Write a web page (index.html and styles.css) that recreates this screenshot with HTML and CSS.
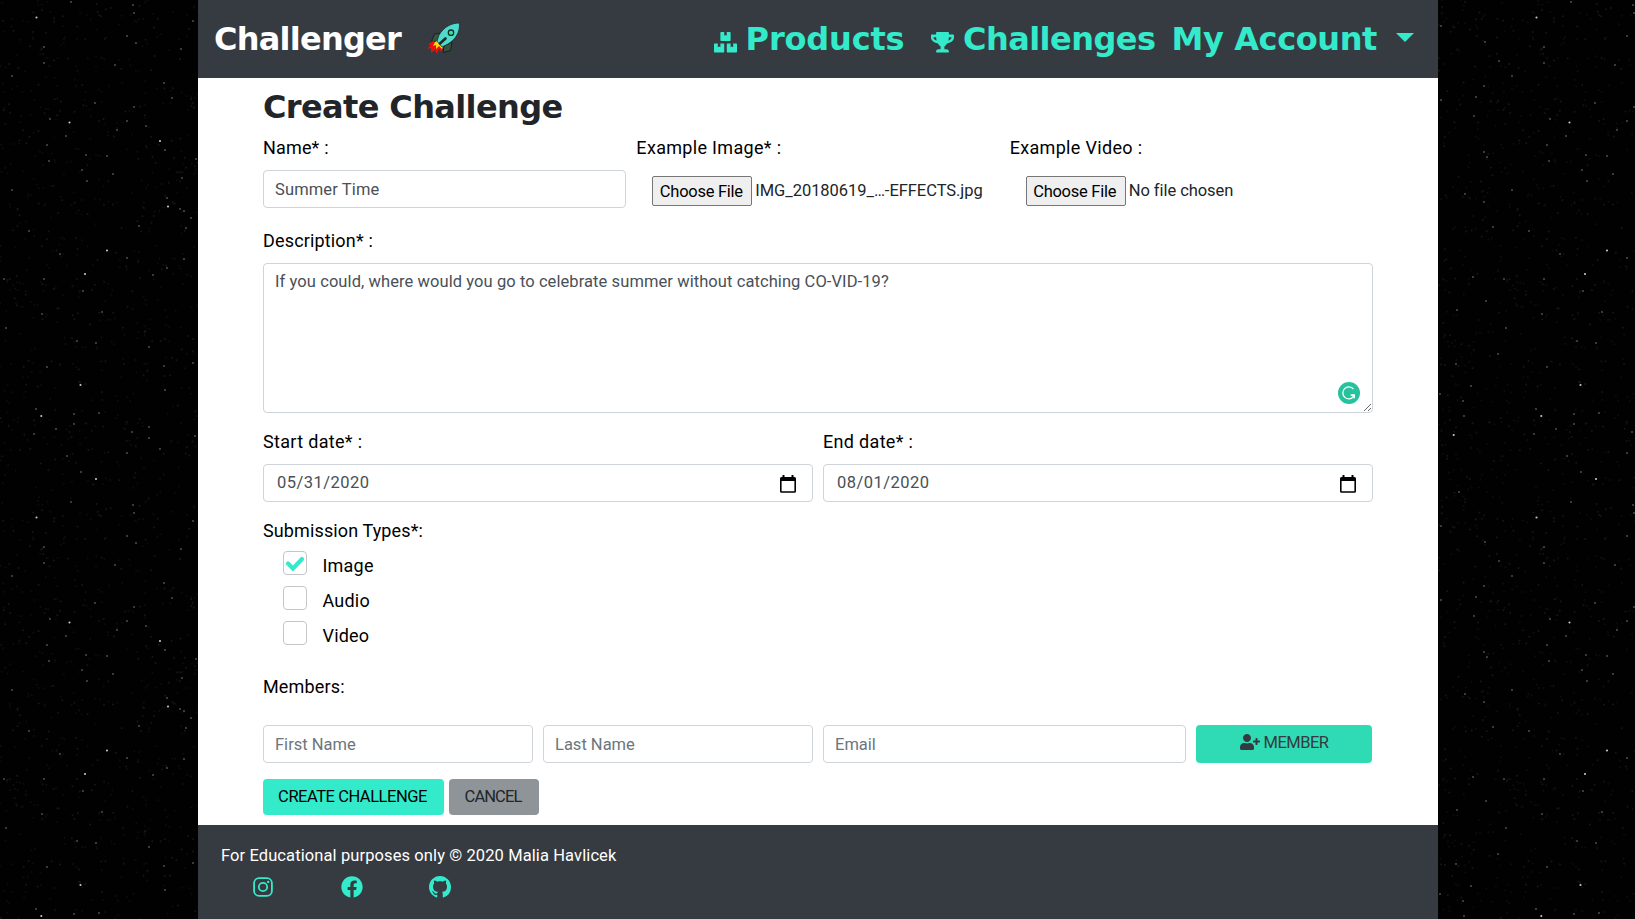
FILE: index.html
```
<!DOCTYPE html>
<html lang="en">
<head>
<meta charset="utf-8">
<title>Challenger</title>
<link rel="stylesheet" href="styles.css">
</head>
<body>
<svg class="sky" aria-hidden="true">
  <defs><pattern id="stars" width="500" height="500" patternUnits="userSpaceOnUse"></pattern></defs>
  <rect width="100%" height="100%" fill="url(#stars)"/>
</svg>
<div class="page">
  <header class="navbar">
    <div class="brand">
      <span class="brand-name">Challenger</span>
      <svg class="rocket" viewBox="0 0 34 34">
        <path d="M4.500 19l3-7 7-1-3 9zM17 24l8-4-1.500 8.500-7.500 2z" fill="#35553f" stroke="#17211f"/>
        <path d="M6 19l-5 4 3 0-4 4 4-1 0 5 4-3 2 4 2-5 3 3 1-7z" fill="#f20d0d"/>
        <path d="M8 20l-2 4 3-1 0 4 3-3 3 3 2-5-5-4z" fill="#f5dc17"/>
        <path d="M32.500 1C24 1 17 5 12 13l-2 6 5 6 6-3C29 17 33 10 32.500 1z" fill="#4fdacb" stroke="#17302f" stroke-width=".8"/>
        <circle cx="24" cy="10.700" r="2.700" fill="#3be58d" stroke="#12302b" stroke-width="1.300"/>
        <path d="M13 21.500l5.500-5" stroke="#17302f" stroke-width="2.600" stroke-linecap="round"/>
      </svg>
    </div>
    <nav class="links">
      <a class="link products"><svg class="nav-icon boxes" viewBox="0 0 576 512"><path d="M560 288h-80v96l-32-21.300-32 21.300v-96h-80c-8.800 0-16 7.200-16 16v192c0 8.800 7.200 16 16 16h224c8.800 0 16-7.200 16-16V304c0-8.800-7.200-16-16-16zm-384-64h224c8.800 0 16-7.200 16-16V16c0-8.800-7.200-16-16-16h-80v96l-32-21.300L256 96V0h-80c-8.800 0-16 7.200-16 16v192c0 8.800 7.200 16 16 16zm64 64h-80v96l-32-21.300L96 384v-96H16c-8.800 0-16 7.200-16 16v192c0 8.800 7.200 16 16 16h224c8.800 0 16-7.200 16-16V304c0-8.800-7.200-16-16-16z"/></svg><span>Products</span></a>
      <a class="link challenges"><svg class="nav-icon" viewBox="0 0 576 512"><path d="M552 64H448V24c0-13.300-10.700-24-24-24H152c-13.300 0-24 10.700-24 24v40H24C10.700 64 0 74.700 0 88v56c0 35.700 22.500 72.400 61.900 100.700 31.500 22.700 69.800 37.100 110 41.700C203.300 338.500 240 360 240 360v72h-48c-35.300 0-64 20.700-64 56v12c0 6.600 5.400 12 12 12h296c6.600 0 12-5.400 12-12v-12c0-35.300-28.700-56-64-56h-48v-72s36.700-21.500 68.100-73.600c40.300-4.600 78.600-19 110-41.700 39.300-28.300 61.900-65 61.900-100.700V88c0-13.300-10.700-24-24-24zM99.300 192.800C74.900 175.200 64 155.600 64 144v-16h64.200c1 32.600 5.800 61.200 12.800 86.200-15.100-5.200-29.200-12.400-41.700-21.400zM512 144c0 16.100-17.700 36.100-35.300 48.800-12.500 9-26.700 16.200-41.800 21.400 7-25 11.800-53.600 12.800-86.200H512v16z"/></svg><span>Challenges</span></a>
      <a class="link account"><span>My Account</span><i class="caret"></i></a>
    </nav>
  </header>

  <main class="content">
    <h1 class="title">Create Challenge</h1>

    <div class="row top-row">
      <div class="third">
        <div class="label">Name* :</div>
        <div class="field">Summer Time</div>
      </div>
      <div class="third">
        <div class="label wide">Example Image* :</div>
        <div class="file"><button class="choose">Choose File</button><span>IMG_20180619_…-EFFECTS.jpg</span></div>
      </div>
      <div class="third">
        <div class="label wide">Example Video :</div>
        <div class="file"><button class="choose">Choose File</button><span>No file chosen</span></div>
      </div>
    </div>

    <div class="label description-label">Description* :</div>
    <div class="area">
      <textarea class="textarea" spellcheck="false">If you could, where would you go to celebrate summer without catching CO-VID-19?</textarea>
      <svg class="checker" viewBox="0 0 22 22"><circle cx="11" cy="11" r="11" fill="#25c29d"/><path d="M15.400 7A6 6 0 1 0 15.600 14.500M12.500 13.200h3.800v3" fill="none" stroke="#fff" stroke-width="1.300"/><path d="M13 12.600h4v4z" fill="#fff"/></svg>
    </div>

    <div class="row dates">
      <div class="half">
        <div class="label wide">Start date* :</div>
        <div class="field date"><span>05/31/2020</span><svg class="calendar" viewBox="0 0 16 18"><path d="M2.500 0h2v2h7V0h2v2H14.500A1.500 1.500 0 0 1 16 3.500v12.800a1.500 1.500 0 0 1-1.500 1.500h-13A1.500 1.500 0 0 1 0 16.300V3.500A1.500 1.500 0 0 1 1.500 2h1zM1.600 6v10.200h12.800V6z" fill-rule="evenodd"/></svg></div>
      </div>
      <div class="half">
        <div class="label wide">End date* :</div>
        <div class="field date"><span>08/01/2020</span><svg class="calendar" viewBox="0 0 16 18"><path d="M2.500 0h2v2h7V0h2v2H14.500A1.500 1.500 0 0 1 16 3.500v12.800a1.500 1.500 0 0 1-1.500 1.500h-13A1.500 1.500 0 0 1 0 16.300V3.500A1.500 1.500 0 0 1 1.500 2h1zM1.600 6v10.200h12.800V6z" fill-rule="evenodd"/></svg></div>
      </div>
    </div>

    <div class="label types-label">Submission Types*:</div>
    <div class="checks">
      <label class="check"><span class="box"><svg viewBox="0 0 22 22"><path d="M4 11.500l5 5 9-9.500" fill="none" stroke="#33ebcb" stroke-width="4.200" stroke-linecap="round"/></svg></span><span class="check-text">Image</span></label>
      <label class="check"><span class="box"></span><span class="check-text">Audio</span></label>
      <label class="check"><span class="box"></span><span class="check-text">Video</span></label>
    </div>

    <div class="label members-label">Members:</div>
    <div class="row members">
      <input class="field" placeholder="First Name">
      <input class="field" placeholder="Last Name">
      <input class="field" placeholder="Email">
      <button class="add"><svg viewBox="0 0 640 512"><path d="M624 208h-64v-64c0-8.800-7.200-16-16-16h-32c-8.800 0-16 7.200-16 16v64h-64c-8.800 0-16 7.200-16 16v32c0 8.800 7.200 16 16 16h64v64c0 8.800 7.200 16 16 16h32c8.800 0 16-7.200 16-16v-64h64c8.800 0 16-7.200 16-16v-32c0-8.800-7.200-16-16-16zm-400 48c70.700 0 128-57.300 128-128S294.700 0 224 0 96 57.300 96 128s57.300 128 128 128zm89.600 32h-16.700c-22.200 10.200-46.900 16-72.900 16s-50.600-5.800-72.900-16h-16.700C60.200 288 0 348.200 0 422.400V464c0 26.500 21.500 48 48 48h352c26.500 0 48-21.500 48-48v-41.600c0-74.200-60.200-134.400-134.400-134.400z"/></svg><span>MEMBER</span></button>
    </div>

    <div class="actions">
      <button class="btn create">CREATE CHALLENGE</button>
      <button class="btn cancel">CANCEL</button>
    </div>
  </main>

  <footer class="footer">
    <div class="copyright">For Educational purposes only © 2020 Malia Havlicek</div>
    <div class="social">
      <svg viewBox="0 0 22 22"><g fill="none" stroke="#33ebcb"><rect x="2.100" y="2.100" width="17.800" height="17.800" rx="5" stroke-width="1.800"/><circle cx="11" cy="11" r="4.200" stroke-width="1.800"/></g><circle cx="16.200" cy="5.900" r="1.200"/></svg>
      <svg viewBox="0 0 512 512"><path d="M504 256C504 119 393 8 256 8S8 119 8 256c0 123.780 90.690 226.380 209.250 245V327.690h-63V256h63v-54.640c0-62.150 37-96.480 93.670-96.480 27.140 0 55.520 4.840 55.520 4.840v61h-31.280c-30.800 0-40.410 19.120-40.410 38.730V256h68.780l-11 71.690h-57.780V501C413.310 482.380 504 379.780 504 256z"/></svg>
      <svg viewBox="0 0 16 16"><path d="M8 0C3.580 0 0 3.580 0 8c0 3.540 2.290 6.530 5.470 7.590.4.070.55-.17.55-.38 0-.19-.01-.82-.01-1.490-2.010.37-2.530-.49-2.690-.94-.09-.23-.48-.94-.82-1.130-.28-.15-.68-.52-.01-.53.63-.01 1.080.58 1.230.82.72 1.210 1.870.87 2.330.66.07-.52.28-.87.51-1.070-1.780-.2-3.640-.89-3.640-3.950 0-.87.31-1.590.82-2.150-.08-.2-.36-1.020.08-2.120 0 0 .67-.21 2.200.82.64-.18 1.320-.27 2-.27s1.360.09 2 .27c1.530-1.040 2.200-.82 2.200-.82.44 1.100.16 1.920.08 2.120.51.56.82 1.270.82 2.150 0 3.070-1.870 3.750-3.650 3.950.29.25.54.73.54 1.480 0 1.070-.01 1.930-.01 2.200 0 .21.15.46.55.38A8.010 8.010 0 0 0 16 8c0-4.420-3.580-8-8-8z"/></svg>
    </div>
  </footer>
</div>
<script src="stars.js"></script>
</body>
</html>
```
FILE: styles.css
```
* { box-sizing: border-box; }

body {
  margin: 0;
  height: 919px;
  overflow: hidden;
  background: #010101;
  color: #000;
  font-family: Roboto, "Liberation Sans", sans-serif;
  font-size: 16.5px;
}

button, input, textarea { font: inherit; letter-spacing: inherit; }

.sky {
  position: fixed;
  inset: 0;
  width: 100%;
  height: 100%;
  z-index: -1;
}

.page {
  display: flex;
  flex-direction: column;
  width: 1240px;
  height: 919px;
  margin-left: 198px;
  background: #fff;
}

/* Navigation */
.navbar {
  display: flex;
  justify-content: space-between;
  height: 78px;
  padding: 0 24px 0 16px;
  background: #363a41;
  font: bold 32px/78px "DejaVu Sans", sans-serif;
}

.brand { display: flex; color: #fff; }
.brand-name { width: 213px; letter-spacing: -0.77px; }
.rocket { width: 34px; height: 34px; margin-top: 22px; fill: none; }

.links { display: flex; color: #33ebcb; }
.link { display: flex; }
.nav-icon { width: 23px; height: 20.5px; margin: 32px 9px 0 0; fill: #33ebcb; }
.products { letter-spacing: -0.17px; margin-right: 26.5px; }
.challenges { letter-spacing: -0.54px; margin-right: 16px; }
.account { letter-spacing: -0.39px; }

.caret {
  margin: 33px 0 0 19px;
  width: 18px;
  height: 9px;
  background: #33ebcb;
  clip-path: polygon(0 0, 100% 0, 50% 100%);
}

/* Form */
.content { height: 747px; padding: 10px 65px 0; }

.title {
  margin: 0;
  font: bold 32px/38px "DejaVu Sans", sans-serif;
  letter-spacing: -0.63px;
  color: #212529;
}

.row { display: flex; gap: 10px; }
.third, .half { flex: 1; }
.top-row { margin-top: 10px; }

.label {
  height: 24px;
  margin-bottom: 10px;
  font-size: 18px;
  line-height: 24px;
  letter-spacing: 0.16px;
}
.label.wide { letter-spacing: 0.32px; }

.field {
  height: 38px;
  padding: 0 11px;
  border: 1px solid #ced4da;
  border-radius: 4px;
  background: #fff;
  color: #495057;
  line-height: 37px;
  letter-spacing: 0.12px;
}
.field::placeholder { color: #6c757d; opacity: 1; }

.file {
  display: flex;
  align-items: center;
  gap: 3px;
  height: 38px;
  padding: 5px 0 1px 16px;
  color: #212529;
  line-height: 30px;
  letter-spacing: -0.05px;
}
.choose {
  width: 100px;
  height: 30px;
  padding: 0 2px 2px 0;
  border: 1px solid #767676;
  border-radius: 2px;
  background: #efefef;
  color: #000;
  letter-spacing: -0.27px;
}

.description-label { margin-top: 21px; }
.area { position: relative; height: 150px; }
.textarea {
  display: block;
  width: 100%;
  height: 150px;
  padding: 6px 11px;
  border: 1px solid #ced4da;
  border-radius: 4px;
  color: #495057;
  line-height: 24px;
  letter-spacing: 0.08px;
}
.checker { position: absolute; right: 13px; bottom: 9px; width: 22px; height: 22px; }

.dates { margin-top: 17px; }
.date {
  display: flex;
  justify-content: space-between;
  padding: 0 16px 0 13px;
  letter-spacing: 0.48px;
  line-height: 35px;
}
.calendar { width: 16px; height: 18px; margin-top: 10px; fill: #000; }

.types-label { margin: 17px 0 8px; letter-spacing: 0.12px; }
.checks { display: flex; flex-direction: column; gap: 11px; padding-left: 20px; }
.check { display: flex; gap: 15.5px; height: 24px; }
.box {
  width: 24px;
  height: 24px;
  border: 1px solid #c4c6c8;
  border-radius: 4px;
}
.box svg { display: block; width: 22px; height: 22px; }
.check-text { font-size: 18px; line-height: 30px; letter-spacing: 0.2px; }

.members-label { margin: 30px 0 26px; }
.members .field { width: 270px; line-height: normal; letter-spacing: 0; }
.members .field:nth-child(3) { width: 363px; }
.add {
  display: flex;
  justify-content: center;
  gap: 4px;
  width: 176px;
  height: 38px;
  padding: 0;
  border: 0;
  border-radius: 4px;
  background: #2edbb4;
  color: #343a40;
  line-height: 35px;
  letter-spacing: -0.53px;
}
.add svg { width: 20px; height: 16px; margin-top: 9px; fill: #343a40; }

.actions { display: flex; gap: 5px; margin-top: 16px; }
.btn {
  height: 36px;
  padding: 0 2px 0 0;
  border: 0;
  border-radius: 4px;
  line-height: 34px;
}
.create { width: 181px; background: #33ebcb; color: #000; letter-spacing: -0.47px; }
.cancel { width: 90px; background: #8f9498; color: #212529; letter-spacing: -0.9px; }

/* Footer */
.footer { flex: 1; padding: 18px 22px; background: #363a41; color: #fff; }
.copyright { padding-left: 1px; line-height: 25px; letter-spacing: 0.1px; }
.social { display: flex; gap: 66.5px; padding: 8px 0 0 32px; }
.social svg { width: 22px; height: 22px; fill: #33ebcb; }
```
FILE: stars.js
```
// One 500px tile of the night sky: hand-placed stars plus faint dust.
const bright = [[36.5,17.5],[69.5,122.5],[160,141],[168,206.5],[107,250.5],[85,274],[80.5,385],[41.3,416],[96,479],[453.7,435]];
const medium = [[44,47],[44,63],[12,76],[71,2],[133,5],[134,13],[127,36],[136,43],[115,65],[181,49],[193,21],[95,103],[164,83],[172,98],[134,107],[127,121],[117,130],[50,119],[66,136],[47,145],[49,161],[146,126],[86,155],[107,156],[165,150],[82,170],[87,181],[113,174],[182,178],[196,159],[12,190],[167,198],[180,209],[184,211],[191,218],[186,228],[139,226],[29,231],[60,254],[127,258],[184,259],[44,279],[4,279],[153,275],[167,268],[83,291],[42,314],[6,328],[102,312],[77,341],[96,343],[149,347],[47,367],[164,366],[193,363],[165,390],[36,409],[74,414],[74,424],[99,413],[34,434],[56,429],[132,432],[149,427],[149,438],[160,449],[195,436],[127,453],[67,456],[81,472],[471,386],[463,401],[440,394],[456,364],[457,310],[486,301],[473,277],[465,194],[464,416],[459,492],[484,202],[487,157],[484,152],[474,116],[441,100],[476,97],[484,86],[499,61],[485,42],[441,26],[493,227],[498,354]];
const tile = document.getElementById("stars");
function star(x, y, r, fill) {
  const c = document.createElementNS("http://www.w3.org/2000/svg", "circle");
  c.setAttribute("cx", x);
  c.setAttribute("cy", y);
  c.setAttribute("r", r);
  c.setAttribute("fill", fill);
  tile.appendChild(c);
}
let seed = 7;
function rand() {
  seed = (seed * 16807) % 2147483647;
  return seed / 2147483647;
}
for (let i = 0; i < 1800; i++) star(rand() * 500, rand() * 500, 1, i % 3 ? "#0c0d0b" : "#151613");
for (const [x, y] of medium) star(x, y, 0.9, "#55554f");
for (const [x, y] of bright) star(x, y, 1.05, "#c8c8c2");
```
